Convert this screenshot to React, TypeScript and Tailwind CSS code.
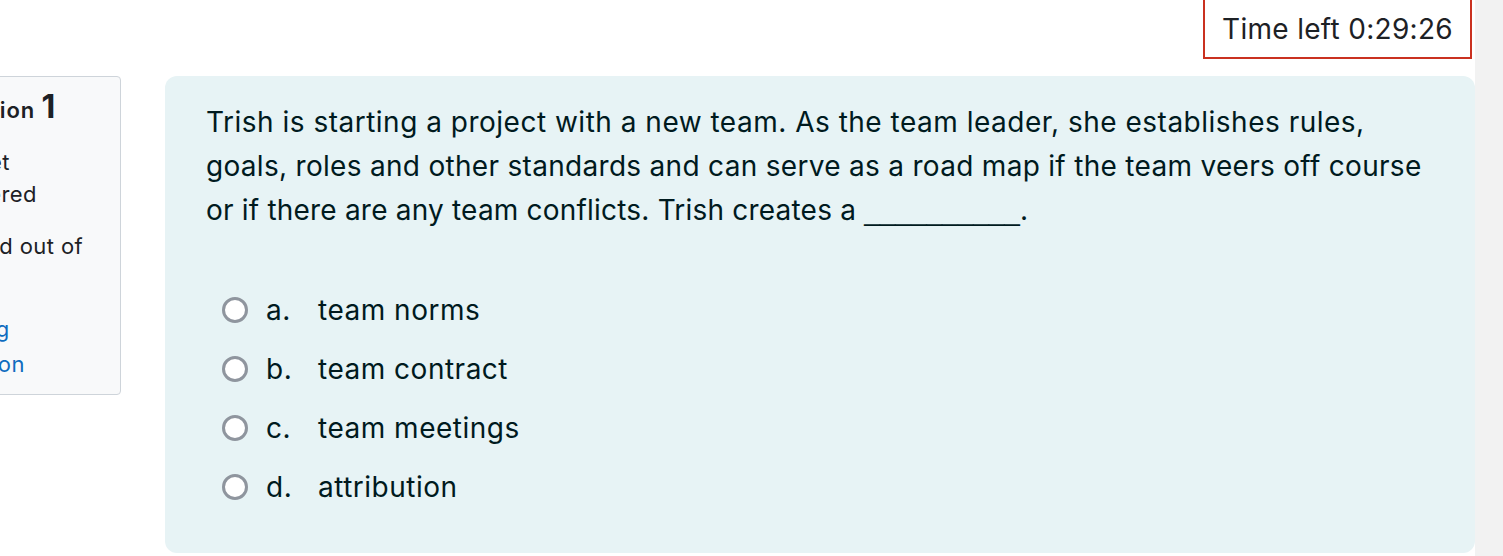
const options = [
  { letter: "a.", text: "team norms" },
  { letter: "b.", text: "team contract" },
  { letter: "c.", text: "team meetings" },
  { letter: "d.", text: "attribution" },
];

function Radio() {
  return <span className="block h-[26px] w-[26px] shrink-0 rounded-full border-[3px] border-[#8f959e] bg-white" />;
}

export default function App() {
  return (
    <div className="flex h-[556px] w-[1503px] overflow-hidden bg-white font-['Inter',sans-serif] text-[#1d2125]">
      <div className="flex w-[1475px] flex-col">
        {/* timer */}
        <div className="flex justify-end pr-[3px]">
          <div className="flex h-[59px] w-[269px] items-center justify-center border-x-2 border-b-2 border-[#ca3120] text-[28px] tracking-[0.3px]">
            Time left 0:29:26
          </div>
        </div>

        <div className="mt-[17px] flex items-start">
          {/* question info */}
          <div className="ml-[-79px] h-[319px] w-[200px] shrink-0 rounded-[4px] border border-[#ced4da] bg-[#f8f9fa] px-[10px] pt-[10px] text-[22px] leading-[32px] tracking-[0.4px]">
            <h3 className="whitespace-nowrap text-[22px] font-semibold leading-[40px] tracking-[0.9px]">
              Question <span className="text-[32px] font-bold">1</span>
            </h3>
            <div className="mt-[16px]">
              Not yet
              <br />
              answered
            </div>
            <div className="mt-[20px]">
              Marked out of
              <br />
              1.00
            </div>
            <div className="mt-[18px] leading-[35px] text-[#0f6cbf]">
              <span className="inline-block w-[32px]" />
              Flag
              <br />
              question
            </div>
          </div>

          {/* question */}
          <div className="ml-[44px] h-[477px] flex-1 rounded-[12px] bg-[#e7f3f5] pl-[41px] pt-[24px] text-[#001a1e]">
            <div className="text-[28px] leading-[44px] tracking-[0.5px]">
              <div className="whitespace-nowrap">Trish is starting a project with a new team. As the team leader, she establishes rules,</div>
              <div className="whitespace-nowrap tracking-[0.3px]">goals, roles and other standards and can serve as a road map if the team veers off course</div>
              <div className="whitespace-nowrap tracking-[0.2px]">
                or if there are any team conflicts. Trish creates a{" "}
                <span className="font-['Liberation_Sans',sans-serif] tracking-normal">__________</span>.
              </div>
            </div>
            <div className="mt-[47px] flex flex-col">
              {options.map((o) => (
                <label key={o.letter} className="flex h-[59px] items-center pl-[16px] text-[28px] tracking-[0.5px]">
                  <Radio />
                  <span className="ml-[18px] w-[52px]">{o.letter}</span>
                  <span>{o.text}</span>
                </label>
              ))}
            </div>
          </div>
        </div>
      </div>
      <div className="flex-1 bg-[#f2f2f2]" />
    </div>
  );
}
